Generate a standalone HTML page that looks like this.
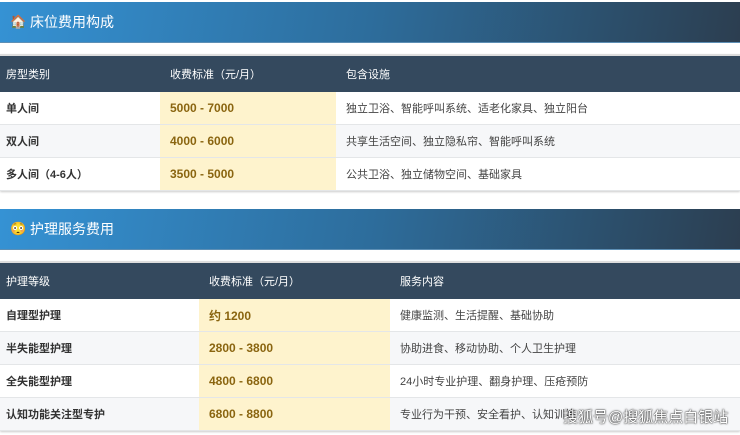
<!DOCTYPE html><html><head><meta charset="utf-8"><style>
body{margin:0;width:740px;height:435px;background:#fff;font-family:"Liberation Sans","Noto Sans CJK SC",sans-serif;overflow:hidden;position:relative}
.hd{position:absolute;left:0;width:740px;height:40px;background:linear-gradient(100deg,#3592d4 0%,#2d6d9c 50%,#2c3e50 100%);color:#fff;font-size:14px;line-height:40px;border-bottom:1px solid #5d8fb5}
.hd span{position:absolute;left:10px;font-size:13px}
.hd b{position:absolute;left:30px;font-weight:normal}
table{position:absolute;left:0;width:740px;border-collapse:collapse;font-size:11px;box-shadow:0 1px 2px #ccc}
th{background:#34495e;color:#fff;font-weight:normal;text-align:left;padding:0 0 0 6px;height:36px;border-top:2px solid #ddd}
td{padding:0 0 0 6px;height:32px;border-bottom:1px solid #e4e6e8;color:#444}
tr:nth-child(odd) td{background:#f6f7f9}
td.a{font-weight:bold;color:#333}
td.p{background:#fef3cd!important;color:#8a6510;font-weight:bold;padding-left:10px;font-size:12px}
.wm{position:absolute;left:563px;top:406px;color:#fff;font-size:15px;text-shadow:0 0 2px #333,0 0 1px #000}
</style></head><body>
<div class="hd" style="top:2px"><span>🏠</span><b>床位费用构成</b></div>
<table style="top:54px"><colgroup><col style="width:160px"><col style="width:176px"><col></colgroup>
<tr><th>房型类别</th><th style="padding-left:10px">收费标准（元/月）</th><th style="padding-left:10px">包含设施</th></tr>
<tr><td class="a">单人间</td><td class="p">5000 - 7000</td><td style="padding-left:10px">独立卫浴、智能呼叫系统、适老化家具、独立阳台</td></tr>
<tr><td class="a">双人间</td><td class="p">4000 - 6000</td><td style="padding-left:10px">共享生活空间、独立隐私帘、智能呼叫系统</td></tr>
<tr><td class="a">多人间（4-6人）</td><td class="p">3500 - 5000</td><td style="padding-left:10px">公共卫浴、独立储物空间、基础家具</td></tr>
</table>
<div class="hd" style="top:209px"><span>😳</span><b>护理服务费用</b></div>
<table style="top:261px"><colgroup><col style="width:199px"><col style="width:191px"><col></colgroup>
<tr><th>护理等级</th><th style="padding-left:10px">收费标准（元/月）</th><th style="padding-left:10px">服务内容</th></tr>
<tr><td class="a">自理型护理</td><td class="p">约 1200</td><td style="padding-left:10px">健康监测、生活提醒、基础协助</td></tr>
<tr><td class="a">半失能型护理</td><td class="p">2800 - 3800</td><td style="padding-left:10px">协助进食、移动协助、个人卫生护理</td></tr>
<tr><td class="a">全失能型护理</td><td class="p">4800 - 6800</td><td style="padding-left:10px">24小时专业护理、翻身护理、压疮预防</td></tr>
<tr><td class="a">认知功能关注型专护</td><td class="p">6800 - 8800</td><td style="padding-left:10px">专业行为干预、安全看护、认知训练</td></tr>
</table>
<div class="wm">搜狐号@搜狐焦点白银站</div>
</body></html>
